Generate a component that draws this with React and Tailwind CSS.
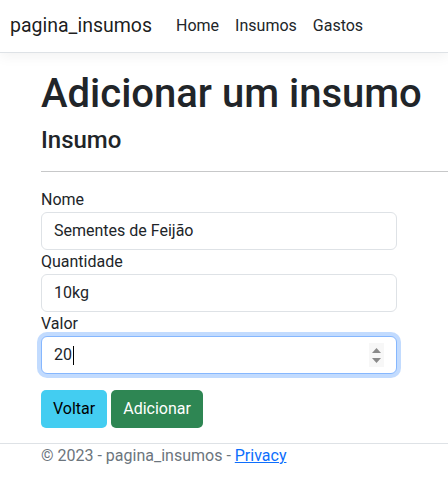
import React from 'react';

const Field = ({ label, value, focused }) => (
  <div>
    <label className="block leading-6 text-[#212529]">{label}</label>
    {focused ? (
      <div className="relative flex h-[38px] w-[356px] items-center rounded-[6px] border border-[#86b7fe] bg-white px-3 shadow-[0_0_0_4px_rgba(13,110,253,0.25)]">
        <span className="text-[#212529]">{value}</span>
        <span className="ml-[1px] h-[19px] w-[1px] bg-black" />
        <div className="absolute right-[12px] top-[6px] flex h-[24px] w-[15px] flex-col items-center justify-center gap-[5px] bg-[#f7f7f7]">
          <svg width="9" height="5" viewBox="0 0 9 5"><path d="M0 5 L4.5 0 L9 5 Z" fill="#8a8a8a" /></svg>
          <svg width="9" height="5" viewBox="0 0 9 5"><path d="M0 0 L4.5 5 L9 0 Z" fill="#8a8a8a" /></svg>
        </div>
      </div>
    ) : (
      <div className="flex h-[38px] w-[356px] items-center rounded-[6px] border border-[#dee2e6] bg-white px-3 text-[#212529]">
        {value}
      </div>
    )}
  </div>
);

const App = () => {
  return (
    <div className="min-h-[485px] bg-white text-base text-[#212529]" style={{ fontFamily: 'Roboto, "Liberation Sans", sans-serif' }}>
      <nav className="flex h-[53px] items-center border-b border-[#dee2e6] pl-[10px] shadow-[0_4px_12px_rgba(0,0,0,0.05)]">
        <a className="mr-4 text-[19.5px] text-black/90">pagina_insumos</a>
        <ul className="flex">
          <li><a className="block px-2 text-[#212529]">Home</a></li>
          <li><a className="block px-2 text-[#212529]">Insumos</a></li>
          <li><a className="block px-2 text-[#212529]">Gastos</a></li>
        </ul>
      </nav>

      <main className="pl-[41px] pt-[17px]">
        <h1 className="mb-2 text-[40px] font-medium leading-[48px]">Adicionar um insumo</h1>
        <h4 className="text-[24px] font-medium leading-[29px]">Insumo</h4>
        <hr className="mt-4 mb-4 border-t border-[#c7c8c9]" />

        <div className="flex flex-col">
          <Field label="Nome" value="Sementes de Feijão" />
          <Field label="Quantidade" value="10kg" />
          <Field label="Valor" value="20" focused />
        </div>

        <div className="mt-4 flex gap-[4px]">
          <button className="h-[38px] rounded-[5px] bg-[#43cdf1] px-3 text-black">Voltar</button>
          <button className="h-[38px] rounded-[5px] bg-[#2e8653] px-3 text-white">Adicionar</button>
        </div>
      </main>

      <footer className="mt-[15px] border-t border-[#dee2e6] pl-[41px] leading-6 text-[#6c757d]">
        © 2023 - pagina_insumos - <a className="text-[#0d6efd] underline">Privacy</a>
      </footer>
    </div>
  );
};

export default App;
